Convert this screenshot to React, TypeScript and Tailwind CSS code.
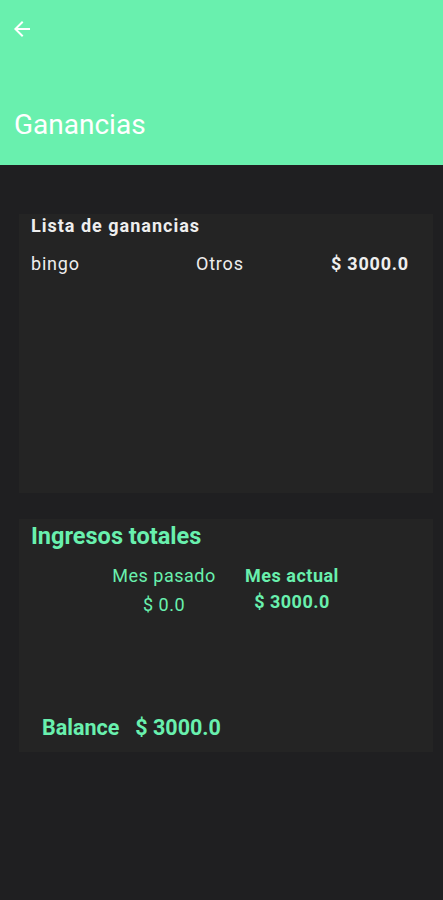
export default function App() {
  return (
    <div className="min-h-[900px] bg-[#1f1f21] font-['Roboto',sans-serif]">
      {/* Toolbar */}
      <header className="h-[165px] bg-[#69f0ae] px-[12px] pt-[17px]">
        <svg width="24" height="24" viewBox="0 0 24 24" className="-ml-[2px]" fill="#ffffff">
          <path d="M20 11H7.83l5.59-5.59L12 4l-8 8 8 8 1.41-1.41L7.83 13H20v-2z" />
        </svg>
        <h1 className="mt-[69px] pl-[2px] text-[28px] leading-[30px] text-white">Ganancias</h1>
      </header>

      <main className="pt-[49px] pr-[10px] pl-[19px]">
        {/* List card */}
        <section className="h-[279px] bg-[#242424] px-[12px]">
          <h2 className="text-[18px] leading-[24px] font-bold tracking-[1px] text-[#eeeeee]">
            Lista de ganancias
          </h2>
          <div className="mt-[14px] grid grid-cols-[165px_1fr_auto] pr-[12px] text-[18px] leading-[24px] tracking-[0.8px] text-[#eeeeee]">
            <span>bingo</span>
            <span>Otros</span>
            <span className="font-bold">$ 3000.0</span>
          </div>
        </section>

        {/* Totals card */}
        <section className="mt-[26px] h-[233px] bg-[#242424] px-[12px] pt-[2px] text-[#69f0ae]">
          <h2 className="text-[23.5px] leading-[30px] font-bold">Ingresos totales</h2>
          <div className="mt-[14px] grid grid-cols-[120px_120px] gap-[8px] pl-[73px] text-[18px] leading-[22px] tracking-[0.5px]">
            <div className="flex flex-col items-center">
              <span>Mes pasado</span>
              <span className="mt-[7px]">$ 0.0</span>
            </div>
            <div className="flex flex-col items-center font-bold">
              <span>Mes actual</span>
              <span className="mt-[4px]">$ 3000.0</span>
            </div>
          </div>
          <div className="mt-[99px] flex gap-[16px] pl-[11px] text-[21.5px] leading-[26px] font-bold">
            <span>Balance</span>
            <span>$ 3000.0</span>
          </div>
        </section>
      </main>
    </div>
  );
}
